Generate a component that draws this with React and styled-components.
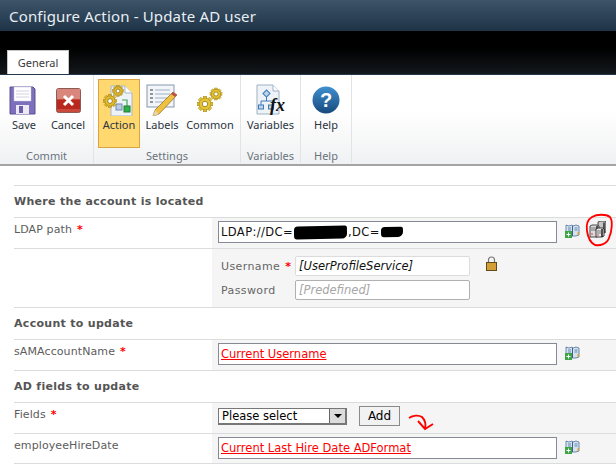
import React from "react";
import styled, { createGlobalStyle } from "styled-components";

const GlobalStyle = createGlobalStyle`
  html, body {
    margin: 0;
    padding: 0;
    background: #fff;
    overflow: hidden;
  }
  body {
    font-family: "DejaVu Sans", Verdana, sans-serif;
  }
`;

const Page = styled.div`
  position: relative;
  width: 616px;
  height: 464px;
  overflow: hidden;
`;

const TitleBar = styled.div`
  height: 31px;
  padding-left: 9px;
  display: flex;
  align-items: center;
  background: linear-gradient(#3d5469, #1e3346);
  color: #e8eef3;
  font-family: "Noto Sans", sans-serif;
  font-size: 15px;
  letter-spacing: 0.16px;
`;

const TabStrip = styled.div`
  height: 44px;
  padding-left: 7px;
  display: flex;
  align-items: flex-end;
  background: linear-gradient(#000 40%, #14181c);
  border-bottom: 1px solid #21384d;
  box-sizing: border-box;
`;

const Tab = styled.div`
  width: 62px;
  height: 24px;
  display: flex;
  align-items: center;
  justify-content: center;
  box-sizing: border-box;
  background: #fff;
  border: 1px solid #c6c6c6;
  border-bottom: none;
  color: #3a3a3a;
  font-family: "Noto Sans", sans-serif;
  font-size: 11px;
`;

const Ribbon = styled.div`
  height: 91px;
  display: flex;
  box-sizing: border-box;
  background: linear-gradient(#fff 40%, #f0f1f2);
  border-bottom: 2px solid #a4a4a4;
`;

const Group = styled.div`
  width: ${(p) => p.$width}px;
  box-sizing: border-box;
  display: flex;
  flex-direction: column;
  border-right: 1px solid #e2e3e4;
  padding-top: 4px;
  margin-bottom: 1px;
`;

const GroupItems = styled.div`
  height: 69px;
  display: flex;
  padding-left: ${(p) => p.$inset || 0}px;
`;

const GroupLabel = styled.div`
  flex: 1;
  display: flex;
  align-items: center;
  justify-content: center;
  color: #6a7480;
  font-family: "Noto Sans", sans-serif;
  font-size: 11px;
`;

const RibbonItem = styled.div`
  width: ${(p) => p.$width}px;
  box-sizing: border-box;
  display: flex;
  flex-direction: column;
  align-items: center;
  padding-top: ${(p) => (p.$active ? 5 : 6)}px;
  color: #2b3440;
  font-family: "Noto Sans", sans-serif;
  font-size: 11px;
  background: ${(p) => (p.$active ? "#ffd870" : "transparent")};
  border: ${(p) => (p.$active ? "1px solid #d9a441" : "none")};
`;

const IconSlot = styled.div`
  width: 32px;
  height: 30px;
  margin-bottom: 2px;
  display: flex;
  align-items: center;
  justify-content: center;
`;

const Form = styled.div`
  margin-top: 19px;
  margin-left: 14px;
`;

const Heading = styled.div`
  height: 31px;
  display: flex;
  align-items: center;
  border-top: 1px solid #dcdcdc;
  color: #555;
  font-size: 11px;
  font-weight: bold;
  letter-spacing: 0.3px;
`;

const Row = styled.div`
  display: grid;
  grid-template-columns: 198px 1fr;
  height: ${(p) => p.$height}px;
  border-top: 1px solid #dcdcdc;
`;

const Label = styled.div`
  padding-top: 5px;
  color: #5c5c5c;
  font-size: 11px;
  letter-spacing: 0.1px;
`;

const Star = styled.span`
  color: #f00;
  font-weight: bold;
  margin-left: 5px;
`;

const Cell = styled.div`
  background: #f5f5f5;
  padding: ${(p) => p.$pad || "3px 0 0 6px"};
  display: flex;
  align-items: flex-start;
`;

const TextBox = styled.div`
  width: 339px;
  height: 22px;
  box-sizing: border-box;
  background: #fff;
  border: 1px solid #858a94;
  padding-left: 2px;
  display: flex;
  align-items: center;
  color: #111;
  font-size: 11.5px;
  white-space: pre;
`;

const TokenLink = styled.span`
  color: #f00;
  text-decoration: underline;
`;

const LdapPrefix = styled.span`
  letter-spacing: 0.4px;
`;

const Redaction = styled.span`
  display: inline-block;
  width: ${(p) => p.$width}px;
  height: ${(p) => p.$height}px;
  margin: 0 ${(p) => p.$gap || 1}px;
  background: #000;
  border-radius: 4px 2px 5px 3px;
  transform: rotate(-1deg);
`;

const SideIcon = styled.div`
  margin-left: 8px;
  margin-top: 2px;
  width: 15px;
  height: 14px;
`;

const ServerIcon = styled.div`
  margin-left: 9px;
  margin-top: 0;
  width: 17px;
  height: 17px;
`;

const Credentials = styled.div`
  display: grid;
  grid-template-columns: 74px 175px auto;
  grid-auto-rows: 20px;
  row-gap: 4px;
  align-items: center;
  padding: 7px 0 0 9px;
  color: #666;
  font-size: 11px;
  letter-spacing: 0.4px;
`;

const CredentialBox = styled.div`
  height: 20px;
  box-sizing: border-box;
  background: #fff;
  border: 1px solid ${(p) => (p.$disabled ? "#b0b0b0" : "#dcdcdc")};
  border-radius: 2px;
  padding-left: 3px;
  display: flex;
  align-items: center;
  font-style: italic;
  font-size: 11.5px;
  letter-spacing: 0;
  color: ${(p) => (p.$disabled ? "#a6a6a6" : "#111")};
`;

const LockSlot = styled.div`
  margin-left: 16px;
  align-self: start;
  height: 15px;
`;

const SelectBox = styled.div`
  margin-top: 2px;
  width: 129px;
  height: 17px;
  box-sizing: border-box;
  border: 1px solid #777;
  border-width: 1px 2px 2px 1px;
  background: #fff;
  display: flex;
  align-items: center;
  justify-content: space-between;
  padding-left: 3px;
  color: #000;
  font-size: 11.5px;
`;

const SelectArrow = styled.div`
  width: 16px;
  height: 14px;
  box-sizing: border-box;
  background: #dcdcdc;
  border-left: 1px solid #666;
  display: flex;
  align-items: center;
  justify-content: center;
  &::after {
    content: "";
    border: 4px solid transparent;
    border-top: 4px solid #000;
    border-bottom: 0;
  }
`;

const AddButton = styled.div`
  margin-left: 12px;
  width: 41px;
  height: 20px;
  box-sizing: border-box;
  background: #f2f2f2;
  border: 1px solid #8a8a8a;
  display: flex;
  align-items: center;
  justify-content: center;
  color: #000;
  font-size: 12px;
`;

const Annotation = styled.svg`
  position: absolute;
  left: ${(p) => p.$left}px;
  top: ${(p) => p.$top}px;
  overflow: visible;
`;

const Gear = ({ x, y, r, fill = "#e3bb2e" }) => {
  const teeth = [0, 45, 90, 135].map((a) => (
    <rect
      key={a}
      x={x - r * 0.28}
      y={y - r * 1.2}
      width={r * 0.56}
      height={r * 2.4}
      fill={fill}
      stroke="#8f7414"
      strokeWidth="0.4"
      transform={`rotate(${a} ${x} ${y})`}
    />
  ));
  return (
    <g>
      {teeth}
      <circle cx={x} cy={y} r={r * 0.92} fill={fill} stroke="#8f7414" strokeWidth="0.5" />
      <circle cx={x} cy={y} r={r * 0.42} fill="#fff" stroke="#8f7414" strokeWidth="0.8" />
    </g>
  );
};

const SaveIcon = () => (
  <svg width="30" height="29" viewBox="0 0 30 29">
    <path d="M1 1h23l2 2v25H1z" fill="#7d6fbb" stroke="#5c5095" />
    <rect x="5" y="1" width="17" height="14" fill="#fff" stroke="#c8c8d8" strokeWidth="0.5" />
    <path d="M7 5h13M7 8h13M7 11h13" stroke="#d2d2de" />
    <rect x="7" y="19" width="13" height="9" fill="#ece9f5" />
    <rect x="10" y="20" width="4" height="7" fill="#6a5ea8" />
  </svg>
);

const CancelIcon = () => (
  <svg width="25" height="25" viewBox="0 0 25 25">
    <rect x="0.5" y="0.5" width="24" height="24" rx="2" fill="#c9493c" stroke="#8e5a55" />
    <rect x="1" y="1" width="23" height="10" fill="#d9867d" />
    <rect x="1" y="12" width="23" height="9" fill="#b8281c" />
    <path d="M8 8l9 9M17 8l-9 9" stroke="#fff" strokeWidth="3" />
  </svg>
);

const ActionIcon = () => (
  <svg width="32" height="32" viewBox="0 0 32 32">
    <path d="M8 2h14l7 7v23H8z" fill="#eef3f8" stroke="#a9b6c4" />
    <path d="M22 2v7h7" fill="#fff" stroke="#a9b6c4" />
    <rect x="13" y="20" width="6" height="6" fill="#b9cde2" stroke="#6b8bb0" />
    <path d="M19 16h5v6" fill="none" stroke="#46a35a" strokeWidth="1.2" />
    <rect x="21" y="22" width="6" height="6" fill="#2fae4b" stroke="#1f7d33" />
    <Gear x={15} y={7} r={4.6} />
    <Gear x={7} y={17} r={5.6} />
  </svg>
);

const LabelsIcon = () => (
  <svg width="32" height="32" viewBox="0 0 32 32">
    <rect x="1" y="1" width="27" height="22" fill="#f2f5f9" stroke="#8899ad" />
    <path d="M4 6h3M4 10h3M4 14h3M4 18h3" stroke="#333" />
    <path d="M9 6h15M9 10h15M9 14h12M9 18h8" stroke="#9db0c6" />
    <path d="M27 8l4 3L13 30l-6 2 2-6z" fill="#f0c040" stroke="#8a6a1e" strokeWidth="0.7" />
    <path d="M27 8l4 3-2 2-4-3z" fill="#c0504d" />
    <path d="M7 32l2-6 4 4z" fill="#e9d3a8" />
  </svg>
);

const CommonIcon = () => (
  <svg width="32" height="32" viewBox="0 0 32 32">
    <Gear x={22} y={10} r={5} fill="#e7c531" />
    <Gear x={11} y={20} r={6.5} fill="#e7c531" />
  </svg>
);

const VariablesIcon = () => (
  <svg width="32" height="32" viewBox="0 0 32 32">
    <path d="M2 1h16l6 6v23H2z" fill="#eef3f8" stroke="#9fb1c4" />
    <path d="M18 1v6h6" fill="#fff" stroke="#9fb1c4" />
    <rect x="9" y="7" width="5" height="5" fill="#bcd3ea" stroke="#3f7ab8" transform="rotate(45 11.5 9.5)" />
    <path d="M11.5 13v4M6 21v-4h12v4" fill="none" stroke="#3f7ab8" />
    <rect x="3.5" y="21" width="5" height="4" fill="#bcd3ea" stroke="#3f7ab8" />
    <rect x="13.5" y="21" width="5" height="4" fill="#bcd3ea" stroke="#3f7ab8" />
    <text x="15" y="27" fontFamily="Liberation Serif, serif" fontStyle="italic" fontWeight="bold" fontSize="18" fill="#111">fx</text>
  </svg>
);

const HelpIcon = () => (
  <svg width="28" height="28" viewBox="0 0 28 28">
    <defs>
      <linearGradient id="helpFill" x1="0" y1="0" x2="0" y2="1">
        <stop offset="0" stopColor="#3f8fd0" />
        <stop offset="1" stopColor="#174a7c" />
      </linearGradient>
    </defs>
    <circle cx="14" cy="14" r="13.5" fill="url(#helpFill)" />
    <text x="14" y="21" textAnchor="middle" fontFamily="Liberation Sans, sans-serif" fontWeight="bold" fontSize="20" fill="#fff">?</text>
  </svg>
);

const BookIcon = () => (
  <svg width="15" height="14" viewBox="0 0 15 14">
    <path d="M1 1l3 1 3-1 1 1 3-1 3 1v9l-3 1H1z" fill="#d5e3f0" stroke="#4f7399" strokeWidth="0.8" />
    <path d="M7.5 2v10" stroke="#3f5f86" />
    <path d="M3 4h3M3 6h3M9.500 4h3M9.500 6h3" stroke="#5f87b3" />
    <path d="M12.500 8h1.500v3h-1.500z" fill="#d9a32e" />
    <rect x="0" y="7" width="7" height="7" fill="#3fa548" />
    <path d="M3.500 8.500v4M1.500 10.500h4" stroke="#fff" />
  </svg>
);

const ServersIcon = () => (
  <svg width="17" height="17" viewBox="0 0 17 17">
    <path d="M9 1l2-1h5l1 1v10l-2 1H9z" fill="#c4c4c4" stroke="#222" strokeWidth="0.8" />
    <path d="M15 1.500v10" stroke="#222" strokeWidth="1.4" />
    <path d="M1 5l2-1h5l2 1v10l-2 1H1z" fill="#dcdcdc" stroke="#222" strokeWidth="0.8" />
    <path d="M8 5v11" stroke="#222" strokeWidth="1.4" />
    <path d="M2 7h5M2 9h5" stroke="#777" />
    <path d="M7 8l2-1h5l1 1v7l-2 1H7z" fill="#e8e8e8" stroke="#111" strokeWidth="0.8" />
    <path d="M13 8v8" stroke="#111" strokeWidth="1.4" />
    <path d="M8 10h4M8 12h4" stroke="#777" />
    <circle cx="3" cy="13" r="0.8" fill="#e03030" />
    <circle cx="9" cy="14" r="0.8" fill="#e03030" />
  </svg>
);

const LockIcon = () => (
  <svg width="11" height="15" viewBox="0 0 11 15">
    <path d="M2.500 7V4a3 3 0 0 1 6 0v3" fill="none" stroke="#777" strokeWidth="1.2" />
    <rect x="0.5" y="6.500" width="10" height="8" fill="#d4a035" stroke="#5e4a1a" />
  </svg>
);

const ribbonGroups = [
  {
    label: "Commit",
    width: 94,
    inset: 2,
    items: [
      { label: "Save", width: 44, icon: <SaveIcon /> },
      { label: "Cancel", width: 44, icon: <CancelIcon /> },
    ],
  },
  {
    label: "Settings",
    width: 147,
    inset: 4,
    items: [
      { label: "Action", width: 42, icon: <ActionIcon />, active: true },
      { label: "Labels", width: 44, icon: <LabelsIcon /> },
      { label: "Common", width: 52, icon: <CommonIcon /> },
    ],
  },
  {
    label: "Variables",
    width: 60,
    items: [{ label: "Variables", width: 59, icon: <VariablesIcon /> }],
  },
  {
    label: "Help",
    width: 51,
    items: [{ label: "Help", width: 50, icon: <HelpIcon /> }],
  },
];

export default function App() {
  return (
    <Page>
      <GlobalStyle />
      <TitleBar>Configure Action - Update AD user</TitleBar>
      <TabStrip>
        <Tab>General</Tab>
      </TabStrip>
      <Ribbon>
        {ribbonGroups.map((group) => (
          <Group key={group.label} $width={group.width}>
            <GroupItems $inset={group.inset}>
              {group.items.map((item) => (
                <RibbonItem key={item.label} $width={item.width} $active={item.active}>
                  <IconSlot>{item.icon}</IconSlot>
                  {item.label}
                </RibbonItem>
              ))}
            </GroupItems>
            <GroupLabel>{group.label}</GroupLabel>
          </Group>
        ))}
      </Ribbon>

      <Form>
        <Heading>Where the account is located</Heading>
        <Row $height={30}>
          <Label>
            LDAP path<Star>*</Star>
          </Label>
          <Cell>
            <TextBox>
              <LdapPrefix>LDAP://DC=</LdapPrefix>
              <Redaction $width={53} $height={13} />
              <LdapPrefix>,DC=</LdapPrefix>
              <Redaction $width={22} $height={10} />
            </TextBox>
            <SideIcon>
              <BookIcon />
            </SideIcon>
            <ServerIcon>
              <ServersIcon />
            </ServerIcon>
          </Cell>
        </Row>
        <Row $height={58}>
          <div />
          <Cell $pad="0">
            <Credentials>
              <span>
                Username<Star>*</Star>
              </span>
              <CredentialBox>[UserProfileService]</CredentialBox>
              <LockSlot>
                <LockIcon />
              </LockSlot>
              <span>Password</span>
              <CredentialBox $disabled>[Predefined]</CredentialBox>
            </Credentials>
          </Cell>
        </Row>
        <Heading>Account to update</Heading>
        <Row $height={30}>
          <Label>
            sAMAccountName<Star>*</Star>
          </Label>
          <Cell>
            <TextBox>
              <TokenLink>Current Username</TokenLink>
            </TextBox>
            <SideIcon>
              <BookIcon />
            </SideIcon>
          </Cell>
        </Row>
        <Heading>AD fields to update</Heading>
        <Row $height={30}>
          <Label>
            Fields<Star>*</Star>
          </Label>
          <Cell>
            <SelectBox>
              Please select
              <SelectArrow />
            </SelectBox>
            <AddButton>Add</AddButton>
          </Cell>
        </Row>
        <Row $height={29}>
          <Label>employeeHireDate</Label>
          <Cell>
            <TextBox>
              <TokenLink>Current Last Hire Date ADFormat</TokenLink>
            </TextBox>
            <SideIcon>
              <BookIcon />
            </SideIcon>
          </Cell>
        </Row>
        <Row $height={1} />
      </Form>

      {/* hand drawn marks on top of the screenshot */}
      <Annotation $left={586} $top={214} width="27" height="33" viewBox="0 0 27 33">
        <path
          d="M6 3C11 0 20 0 24 3c3 4 2 14-1 21-2 6-9 8-14 7C5 29 2 24 1 17 0 11 1 6 6 3z"
          fill="none"
          stroke="#f00"
          strokeWidth="1.8"
        />
      </Annotation>
      <Annotation $left={408} $top={414} width="27" height="17" viewBox="0 0 27 17">
        <path
          d="M1 4C5 1 11 1 14 3C17 6 18 11 17 15M10 7L17 15L25 10"
          fill="none"
          stroke="#f00"
          strokeWidth="1.9"
        />
      </Annotation>
    </Page>
  );
}
